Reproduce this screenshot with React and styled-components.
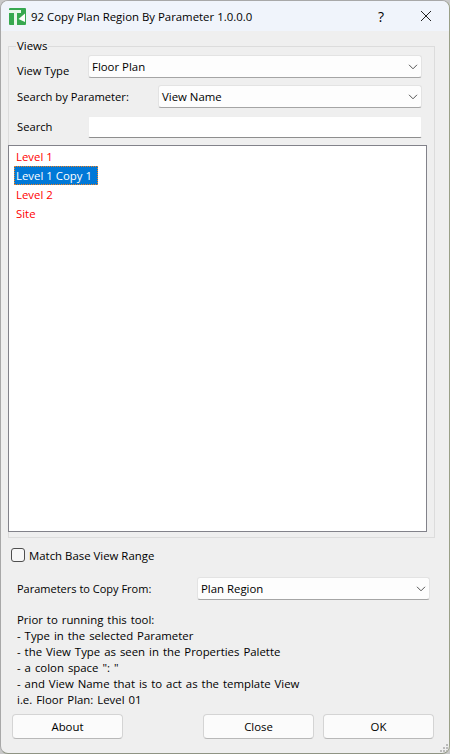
import React from 'react';
import styled, { createGlobalStyle } from 'styled-components';

const Global = createGlobalStyle`
  html, body { margin: 0; padding: 0; background: #c9c9c9; }
  #root { width: 450px; height: 754px; }
`;

const Dialog = styled.div`
  width: 450px; height: 754px; box-sizing: border-box;
  background: #efefef; border: 1px solid #a8a8a8; border-right-color: #9aa088; border-bottom-color: #8f9484;
  border-radius: 8px; overflow: hidden;
  display: flex; flex-direction: column;
  font-family: "Open Sans", "Noto Sans", sans-serif; font-size: 11.4px; color: #000;
`;
const TitleBar = styled.div`
  height: 30px; flex: none; background: #f0f4fb; display: flex; align-items: center; padding-left: 8px;
`;
const TitleText = styled.div` flex: 1; margin-left: 5px; `;
const TitleButton = styled.div`
  width: 46px; height: 30px; display: flex; align-items: center; justify-content: center; font-size: 14px; padding-left: ${p => p.$pl || 0}px; box-sizing: border-box;
`;
const Body = styled.div`
  flex: 1; display: flex; flex-direction: column; padding: 8px 14px 0 7px; position: relative; min-height: 0;
`;
const Group = styled.fieldset`
  margin: 0; padding: 2px 12px 0 0; border: 1px solid #dcdcdc; height: 499px; box-sizing: border-box;
  display: flex; flex-direction: column; min-width: 0; width: 427px;
`;
const Legend = styled.legend` padding: 0 1px; margin-left: 7px; line-height: 14px; `;
const FormRow = styled.div`
  display: flex; align-items: center; height: ${p => p.$h}px; margin-bottom: ${p => p.$mb}px; padding-left: 8px;
`;
const Label = styled.div`
  width: ${p => p.$w}px; flex: none; position: relative; top: ${p => p.$t || 0}px; font-size: ${p => p.$fs || 11.2}px;
`;
const Select = styled.div`
  flex: 1; height: 23px; box-sizing: border-box; background: #fdfdfd; border: 1px solid #e3e3e3; border-bottom-color: #a5a5a5;
  border-radius: 3px; display: flex; align-items: center; justify-content: space-between; padding: 0 3px 0 3px;
`;
const Input = styled.div`
  flex: 1; height: 22px; box-sizing: border-box; background: #fff; border: 1px solid #eeeeee; border-bottom: 1px solid #8e8e8e; border-radius: 2px;
`;
const List = styled.div`
  flex: none; height: 387px; width: 419px; box-sizing: border-box; margin-left: -1px; background: #fff; border: 1px solid #82828a; padding: 1px 5px 0 5px;
`;
const ListItem = styled.div`
  width: 84px; height: 19px; line-height: 19px; box-sizing: border-box; padding-left: 2px; color: #ff0000;
  ${p => p.$sel && `color:#fff;background:#0078d7;outline:1px dotted #f08020;outline-offset:-1px;`}
`;
const CheckRow = styled.div`
  display: flex; align-items: center; gap: 4px; margin: 8px 0 0 3px; height: 18px;
`;
const Box = styled.div`
  width: 12px; height: 12px; border: 1px solid #4f4f4f; border-radius: 3px; background: #f7f7f7;
`;
const ParamRow = styled.div`
  display: flex; align-items: center; height: 23px; margin: 13px 5px 0 9px;
`;
const Help = styled.div`
  margin: 12px 0 0 9px; line-height: 16px; white-space: pre; word-spacing: 1px;
`;
const Footer = styled.div`
  display: flex; margin: 6px 0 0 4px;
`;
const Button = styled.div`
  width: 111px; height: 25px; box-sizing: border-box; background: #fbfbfb; border: 1px solid #d4d4d4; border-bottom-color: #b8b8b8; border-radius: 4px;
  display: flex; align-items: center; justify-content: center; margin-left: ${p => p.$ml || 0}px;
`;
const Grip = styled.svg` position: absolute; right: 0; bottom: 0; `;

const Chevron = () => (
  <svg width="10" height="6" viewBox="0 0 10 6" fill="none" stroke="#555" strokeWidth="1"><path d="M1 .8 5 4.8 9 .8" /></svg>
);

const Logo = () => (
  <svg width="17" height="17" viewBox="0 0 17 17">
    <rect width="17" height="17" rx="1" fill="#37a850" />
    <path d="M0 2h12v3H8v12H5V5H0z" fill="#eaf7ec" />
    <path d="M16 5.500 9.500 11 16 14z" fill="#fff" />
  </svg>
);

export default function App() {
  const views = ['Level 1', 'Level 1 Copy 1', 'Level 2', 'Site'];
  return (
    <>
      <Global />
      <Dialog>
        <TitleBar>
          <Logo />
          <TitleText>92 Copy Plan Region By Parameter 1.0.0.0</TitleText>
          <TitleButton $pl={2}>?</TitleButton>
          <TitleButton>
            <svg width="12" height="12" viewBox="0 0 12 12" stroke="#222" strokeWidth="1"><path d="M1 1 11 11M11 1 1 11" /></svg>
          </TitleButton>
        </TitleBar>
        <Body>
          <Group>
            <Legend>Views</Legend>
            <FormRow $h={23} $mb={7}>
              <Label $w={71} $t={4}>View Type</Label>
              <Select>Floor Plan<Chevron /></Select>
            </FormRow>
            <FormRow $h={23} $mb={8}>
              <Label $w={141}>Search by Parameter:</Label>
              <Select>View Name<Chevron /></Select>
            </FormRow>
            <FormRow $h={22} $mb={7}>
              <Label $w={71} $t={-1}>Search</Label>
              <Input />
            </FormRow>
            <List>
              {views.map((v, i) => <ListItem key={v} $sel={i === 1}>{v}</ListItem>)}
            </List>
          </Group>
          <CheckRow><Box />Match Base View Range</CheckRow>
          <ParamRow>
            <Label $w={180} $fs={11}>Parameters to Copy From:</Label>
            <Select>Plan Region<Chevron /></Select>
          </ParamRow>
          <Help>{`Prior to running this tool:
- Type in the selected Parameter
- the View Type as seen in the Properties Palette
- a colon space ": "
- and View Name that is to act as the template View
i.e. Floor Plan: Level 01`}</Help>
          <Footer>
            <Button>About</Button>
            <Button $ml={80}>Close</Button>
            <Button $ml={9}>OK</Button>
          </Footer>
          <Grip width="10" height="10" viewBox="0 0 10 10" fill="#bbb">
            <rect x="7" y="1" width="2" height="2" /><rect x="4" y="4" width="2" height="2" /><rect x="7" y="4" width="2" height="2" />
            <rect x="1" y="7" width="2" height="2" /><rect x="4" y="7" width="2" height="2" /><rect x="7" y="7" width="2" height="2" />
          </Grip>
        </Body>
      </Dialog>
    </>
  );
}
